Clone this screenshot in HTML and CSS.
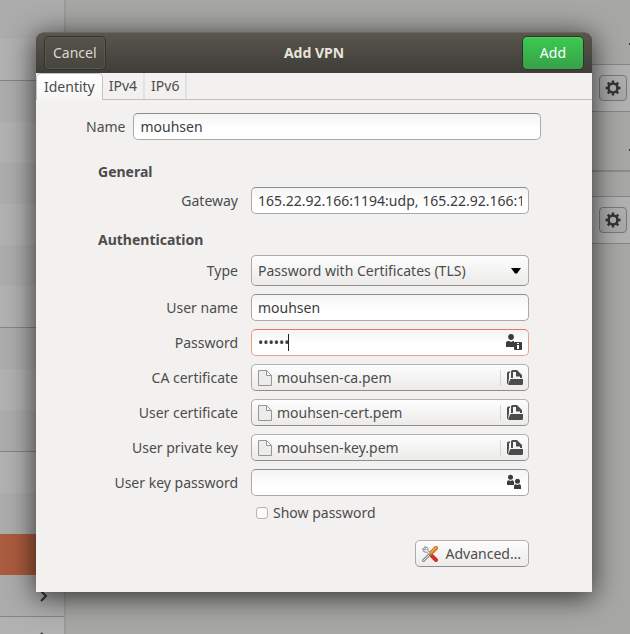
FILE: index.html
```html
<!DOCTYPE html>
<html lang="en">
<head>
<meta charset="utf-8">
<title>Add VPN</title>
<link rel="stylesheet" href="styles.css">
</head>
<body>
<svg class="defs" aria-hidden="true">
  <symbol id="gear" viewBox="0 0 16 16">
    <circle cx="8" cy="8" r="4.500" fill="none" stroke="currentColor" stroke-width="2.600"/>
    <path d="M8 .5v3M8 12.500v3M.5 8h3M12.500 8h3M2.700 2.700l2 2M11.300 11.300l2 2M2.700 13.300l2-2M11.300 4.700l2-2" stroke="currentColor" stroke-width="2.400"/>
  </symbol>
  <symbol id="file" viewBox="0 0 14 16">
    <path d="M.5.5h8l5 5v10H.5z" fill="#ececeb" stroke="#969696"/>
    <path d="M8.500.5v5h5z" fill="#fff" stroke="#969696"/>
  </symbol>
  <symbol id="open" viewBox="0 0 16 16">
    <path d="M0 3Q0 1.500 1.500 1.500H3V3H2v5L1 14Q0 14 0 13z" fill="currentColor"/>
    <path d="M4 8V1.500Q4 0 5.500 0H10l5 5v3h-2V6.500H9V2H6v6z" fill="currentColor"/>
    <path d="M3.500 9H16v4.500q0 1.500-1.500 1.500H2q-1 0-.8-1z" fill="currentColor"/>
  </symbol>
  <symbol id="person" viewBox="0 0 16 16">
    <circle cx="5" cy="3" r="2.900" fill="currentColor"/>
    <path d="M0 13V9q0-2 2-2h1l2 1 2-1h1v6z" fill="currentColor"/>
    <path d="M9.500 8H15q1 0 1 1v6q0 1-1 1H9q-1 0-1-1V9q0-1 1-1z" fill="currentColor"/>
    <path d="M11 9h2v1h-2zM11 11h2v4h-2z" fill="#fff"/>
  </symbol>
  <symbol id="people" viewBox="0 0 16 16">
    <g fill="currentColor"><circle cx="4.500" cy="3.300" r="2.500"/><path d="M1 11V8q0-1.800 1.800-1.800l1.700.8 1.700-.8Q8 6.200 8 8v3z"/><circle cx="11.500" cy="7.300" r="2.500"/><path d="M8 15v-3q0-1.700 1.800-1.700l1.700.8 1.700-.8q1.800 0 1.800 1.700v3z"/></g>
  </symbol>
</svg>

<div class="settings">
  <nav class="sidebar" aria-label="Settings">
    <div class="item first"></div><div class="item"></div>
    <div class="item line"></div><div class="item"></div><div class="item"></div><div class="item"></div><div class="item"></div><div class="item"></div>
    <div class="item line"></div><div class="item"></div><div class="item"></div>
    <div class="item line light"></div><div class="item dark"></div><div class="item active"></div>
    <div class="item dark arrow"><svg viewBox="0 0 8 12"><path d="M1 1l5 5-5 5"/></svg></div>
    <div class="item line light arrow"><svg viewBox="0 0 8 12"><path d="M1 1l5 5-5 5"/></svg></div>
  </nav>
  <main class="panel">
    <div class="heading"><i class="plus"></i></div>
    <div class="connection"><button class="gear" aria-label="VPN options"><svg><use href="#gear"/></svg></button></div>
    <div class="heading second"><i class="plus"></i></div>
    <div class="spacer"></div>
    <div class="connection"><button class="gear" aria-label="Proxy options"><svg><use href="#gear"/></svg></button></div>
  </main>
</div>

<div class="overlay">
  <form class="dialog" role="dialog" aria-labelledby="title">
    <header class="titlebar">
      <button type="button" class="bar-button">Cancel</button>
      <h1 id="title">Add VPN</h1>
      <button type="button" class="bar-button add">Add</button>
    </header>
    <div class="tabs" role="tablist">
      <button type="button" class="tab selected" role="tab" aria-selected="true">Identity</button>
      <button type="button" class="tab" role="tab">IPv4</button>
      <button type="button" class="tab" role="tab">IPv6</button>
    </div>
    <div class="content">
      <div class="name-row">
        <label for="name">Name</label>
        <input id="name" class="field" type="text" value="mouhsen">
      </div>
      <section class="group">
        <h2>General</h2>
        <div class="row">
          <label for="gateway">Gateway</label>
          <input id="gateway" class="field" type="text" value="165.22.92.166:1194:udp, 165.22.92.166:1194:tcp">
        </div>
      </section>
      <section class="group">
        <h2>Authentication</h2>
        <div class="row">
          <label for="type">Type</label>
          <div class="control">
            <select id="type" class="field"><option>Password with Certificates (TLS)</option></select>
            <svg class="caret-down" viewBox="0 0 10 6"><path d="M0 0h10L6 5.500H4z"/></svg>
          </div>
        </div>
        <div class="row">
          <label for="user">User name</label>
          <input id="user" class="field" type="text" value="mouhsen">
        </div>
        <div class="row">
          <label for="password">Password</label>
          <div class="control">
            <input id="password" class="field focused" type="password" value="abcdef">
            <span class="cursor"></span>
            <svg class="end-icon"><use href="#person"/></svg>
          </div>
        </div>
        <div class="row">
          <label for="ca">CA certificate</label>
          <button type="button" id="ca" class="field chooser"><svg class="file"><use href="#file"/></svg><span>mouhsen-ca.pem</span><svg class="open"><use href="#open"/></svg></button>
        </div>
        <div class="row">
          <label for="cert">User certificate</label>
          <button type="button" id="cert" class="field chooser"><svg class="file"><use href="#file"/></svg><span>mouhsen-cert.pem</span><svg class="open"><use href="#open"/></svg></button>
        </div>
        <div class="row">
          <label for="key">User private key</label>
          <button type="button" id="key" class="field chooser"><svg class="file"><use href="#file"/></svg><span>mouhsen-key.pem</span><svg class="open"><use href="#open"/></svg></button>
        </div>
        <div class="row">
          <label for="keypass">User key password</label>
          <div class="control">
            <input id="keypass" class="field" type="password">
            <svg class="end-icon"><use href="#people"/></svg>
          </div>
        </div>
        <label class="show"><input type="checkbox">Show password</label>
      </section>
      <button type="button" class="field advanced">
        <svg viewBox="0 0 16 16">
          <path d="M6 5.500l4 4" stroke="#b01c22" stroke-width="2"/>
          <path d="M9.800 9.800l4.200 4.200" stroke="#d2302c" stroke-width="4" stroke-linecap="round"/>
          <path d="M1.500 14.500L8 8" stroke="#888a85" stroke-width="3" stroke-linecap="round"/>
          <path d="M1.500 14.500L8 8" stroke="#eeeeec" stroke-width="1" stroke-linecap="round"/>
          <path d="M8.500 7.500L14 2" stroke="#c76b17" stroke-width="4" stroke-linecap="round"/>
          <path d="M8.500 7L14 1.700" stroke="#f0a248" stroke-width="2" stroke-linecap="round"/>
          <path d="M2 1.200l2 2-1 1-2-2Q0 5.500 3 6.200l1.500-.2L7 8.500 8.500 7 6 4.500Q6.500 0 2 1.200z" fill="#eeeeec" stroke="#888a85"/>
        </svg>
        <span>Advanced…</span>
      </button>
    </div>
  </form>
</div>
</body>
</html>
```

FILE: styles.css
```css
* { box-sizing: border-box; }

body {
  margin: 0;
  height: 100vh;
  overflow: hidden;
  position: relative;
  color: #4c4c4c;
  background: #a7a7a5;
  font: 14px/20px "Noto Sans", "Open Sans", sans-serif;
}

button, input, select { font: inherit; color: inherit; margin: 0; }
.defs { display: none; }

/* Settings window behind the dialog */
.settings { display: flex; height: 100%; overflow: hidden; }
.sidebar { flex: 0 0 66px; border-right: 2px solid #9c9c9a; }
.item { height: 41px; background: #acacac; }
.item:nth-child(even) { background: #b1b1b1; }
.item.first { height: 39px; }
.item.line { height: 42px; border-top: 1px solid #858583; }
.item.item.light { background: #b1b1b1; }
.item.item.dark { background: #acacac; }
.item.item.active { background: #ab5c3e; }
.arrow { display: flex; align-items: center; justify-content: flex-end; padding-right: 16px; }
.arrow svg { width: 8px; height: 12px; fill: none; stroke: #333; stroke-width: 2; }
.panel { flex: 1; }
.heading { display: flex; justify-content: flex-end; height: 64px; padding-top: 43px; }
.heading.second { height: 60px; padding-top: 37px; border-bottom: 2px solid #8b8b89; }
.plus { width: 1px; height: 2px; background: #333; }
.spacer { height: 24px; }
.connection {
  display: flex;
  align-items: center;
  justify-content: flex-end;
  height: 48px;
  padding-right: 3px;
  background: #b0b0b0;
  border: solid #858583;
  border-width: 1px 0;
}
.gear {
  display: grid;
  place-items: center;
  width: 28px;
  height: 26px;
  padding: 0;
  color: #333;
  background: linear-gradient(#afafaf, #a6a6a5);
  border: 1px solid #777;
  border-radius: 4px;
}
.gear svg { width: 16px; height: 16px; }

/* Dialog */
.overlay { position: absolute; inset: 0; padding: 32px 38px 42px 36px; }
.dialog {
  min-height: 100%;
  border-radius: 7px 7px 0 0;
  background: #f2f1f0;
  box-shadow: 0 4px 28px 1px rgba(0, 0, 0, .7);
}
.titlebar {
  display: grid;
  grid-template-columns: 1fr auto 1fr;
  align-items: center;
  height: 41px;
  padding: 0 8px;
  border-radius: 7px 7px 0 0;
  border-top: 1px solid #6b675c;
  background: linear-gradient(#59564c, #3e3d38);
}
.titlebar h1 { margin: 0; color: #e9e5da; font-size: 14px; line-height: 20px; }
.bar-button {
  justify-self: start;
  height: 34px;
  padding: 0 8px;
  color: #dcd9cf;
  background: linear-gradient(#56534a, #45443e);
  border: 1px solid #33322e;
  border-radius: 5px;
  box-shadow: inset 0 0 0 1px #5a574e;
}
.bar-button.add {
  justify-self: end;
  padding: 0 17px;
  color: #fff;
  background: linear-gradient(#3cca50, #36a149);
  box-shadow: inset 0 1px #45d45b;
}
.tabs { display: flex; height: 27px; border-bottom: 1px solid #c0bfbd; }
.tab {
  padding: 0 6px;
  background: none;
  border: 0;
  border-right: 2px solid #e3e2e0;
}
.tab.selected {
  height: 27px;
  padding: 0 7px;
  background: linear-gradient(#fff, #f5f5f4);
  border: 1px solid #c4c3c1;
  border-bottom: 0;
  border-radius: 5px 5px 0 0;
}
.content { padding: 13px 63px 25px 62px; }

.field {
  display: block;
  width: 100%;
  height: 27px;
  padding: 0 6px;
  color: #3c3c3c;
  background: linear-gradient(#f4f4f4, #fff 60%);
  border: 1px solid #aaa9a7;
  border-top-color: #8e8e8e;
  border-radius: 5px;
  outline: 0;
}
.field.focused { border-color: #e9a287; border-top-color: #e07b55; }
.name-row {
  display: grid;
  grid-template-columns: auto 1fr;
  align-items: center;
  column-gap: 8px;
  margin: 0 -12px 22px;
}
.group { display: grid; row-gap: 8px; }
.group + .group { margin-top: 16px; }
h2 { margin: 0 0 -3px; font-size: 14px; line-height: 20px; }
.row {
  display: grid;
  grid-template-columns: 140px 1fr;
  align-items: center;
  column-gap: 13px;
}
.row > label { text-align: right; }
.control { position: relative; }
select.field {
  appearance: none;
  height: 31px;
  color: #4c4c4c;
  background: linear-gradient(#fdfdfd, #ecebea);
  border-color: #aaa9a7 #aaa9a7 #8e8e8e;
}
.caret-down { position: absolute; right: 8px; top: 13px; width: 10px; height: 6px; fill: #000; }
.cursor { position: absolute; left: 37px; top: 5px; width: 1px; height: 17px; background: #222; }
.end-icon { position: absolute; right: 7px; top: 5px; width: 16px; height: 16px; color: #3c3c3c; }
.field.chooser, .field.advanced {
  display: flex;
  align-items: center;
  color: #4c4c4c;
  background: linear-gradient(#fdfdfd, #ecebea);
  border-color: #b3b2b0 #aaa9a7 #8e8e8e;
}
.chooser .file { width: 14px; height: 16px; margin-right: 5px; }
.chooser span { flex: 1; text-align: left; }
.chooser .open {
  width: 23px;
  height: 16px;
  padding-left: 6px;
  margin-right: -1px;
  border-left: 1px solid #d5d4d2;
}
.show { display: flex; align-items: center; gap: 5px; margin: -1px 0 0 158px; }
.show input {
  appearance: none;
  width: 12px;
  height: 12px;
  background: #fafafa;
  border: 1px solid #b5b4b2;
  border-radius: 3px;
}
.field.advanced { width: auto; gap: 8px; margin: 17px 0 0 auto; padding: 0 7px 0 6px; }
.advanced svg { width: 16px; height: 16px; fill: none; }
```
